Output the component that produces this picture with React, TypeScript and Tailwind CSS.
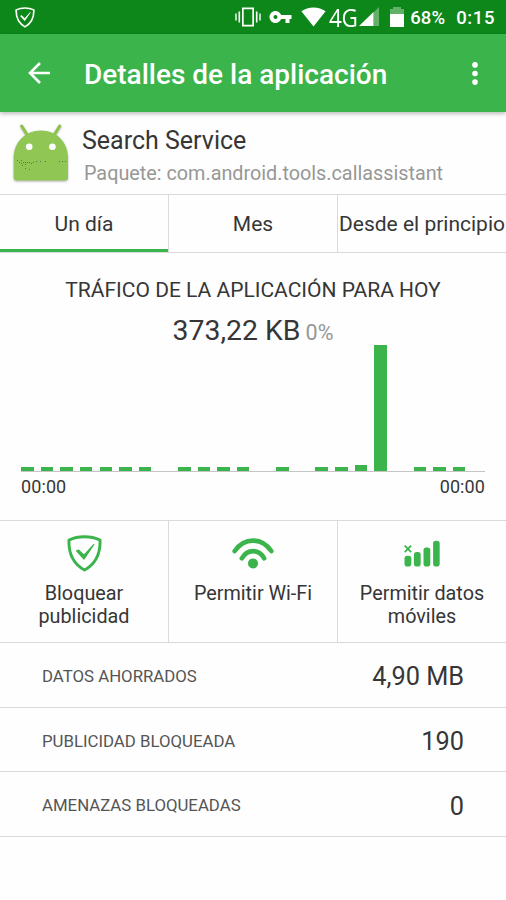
import React from 'react';

interface Action {
  label: string;
  icon: React.ReactNode;
}

interface Stat {
  label: string;
  value: string;
}

// share of the chart height used in each hour of the day
const HOURLY_TRAFFIC = [
  3.2, 3.2, 3.2, 3.2, 3.2, 3.2, 3.2, 0, 3.2, 3.2, 3.2, 3.2,
  0, 3.2, 0, 3.2, 3.2, 5, 100, 0, 3.2, 3.2, 3.2, 0,
];

const TABS = ['Un día', 'Mes', 'Desde el principio'];

const ShieldIcon: React.FC<{ className?: string; strokeWidth?: number }> = ({ className, strokeWidth = 3 }) => (
  <svg viewBox="0 0 36 38" fill="none" stroke="currentColor" strokeWidth={strokeWidth} className={className}>
    <path d="M18 1.8C12.4 1.8 6.6 3 2 5.2C1.7 14.6 3.3 28 18 36C32.7 28 34.3 14.6 34 5.2C29.4 3 23.6 1.8 18 1.8Z" strokeLinejoin="round" />
    <path d="M9.8 16.2L12 15.5L17.5 20.8L27.5 9.8L17.4 24.8Z" fill="currentColor" strokeWidth="1.2" strokeLinejoin="round" />
  </svg>
);

const VibrateIcon = () => (
  <svg viewBox="0 0 26 20" className="h-5 w-[26px]" fill="currentColor">
    <path d="M7 .5h12v19H7zM8.700 2.300v15.400h8.600V2.300z" fillRule="evenodd" />
    <path d="M.3 6.500h1.400v7H.3zM3.500 4.500h1.600v11H3.500zM20.900 4.500h1.600v11h-1.600zM24.300 6.500h1.400v7h-1.400z" />
  </svg>
);

const KeyIcon = () => (
  <svg viewBox="1 6 22 12" className="h-3 w-[23px]" fill="currentColor">
    <path d="M12.65 10C11.83 7.67 9.61 6 7 6c-3.31 0-6 2.69-6 6s2.69 6 6 6c2.61 0 4.83-1.67 5.65-4H17v4h4v-4h2v-4H12.65zM7 14c-1.1 0-2-.9-2-2s.9-2 2-2 2 .9 2 2-.9 2-2 2z" />
  </svg>
);

const WifiIcon = () => (
  <svg viewBox="0 0 25 20" className="h-5 w-[25px]" fill="currentColor">
    <path d="M12.5 19.5L.4 4.2C3.7 1.8 8 .4 12.5 .4s8.800 1.400 12.100 3.800z" />
  </svg>
);

const SignalIcon = () => (
  <svg viewBox="0 0 20 20" className="h-5 w-5" fill="currentColor">
    <path d="M14.5 5.5L20 0v19h-5.500z" opacity=".35" />
    <path d="M0 19L14.500 5v14z" />
  </svg>
);

const BatteryIcon = () => (
  <svg viewBox="0 0 14 20" className="h-5 w-3.5" fill="currentColor">
    <path d="M0 2h3V0h8v2h3v5H0z" opacity=".35" />
    <path d="M0 7h14v13H0z" />
  </svg>
);

const BackIcon = () => (
  <svg viewBox="0 0 22 22" className="h-[22px] w-[22px]" fill="none" stroke="currentColor" strokeWidth="2.6">
    <path d="M22 11H2.500M12 1L2 11l10 10" />
  </svg>
);

const MoreIcon = () => (
  <svg viewBox="0 0 6 23" className="h-[23px] w-1.5" fill="currentColor">
    <circle cx="3" cy="2.9" r="2.8" />
    <circle cx="3" cy="11.5" r="2.8" />
    <circle cx="3" cy="20.1" r="2.8" />
  </svg>
);

const AndroidIcon = () => (
  <svg viewBox="0 0 56 58" className="h-[58px] w-14 drop-shadow-[0_1px_1px_rgba(0,0,0,0.3)]">
    <path d="M8.700 2L14 10.500M46.700 2L41.500 10.500" stroke="#8bc34a" strokeWidth="3" strokeLinecap="round" />
    <path d="M.7 34C.7 18 12.500 6.500 28 6.500S55 18 55 34v19.500a3 3 0 0 1-3 3H3.700a3 3 0 0 1-3-3z" fill="#8fc654" />
    <circle cx="16.2" cy="22.8" r="3.3" fill="#fff" />
    <circle cx="39.4" cy="22.8" r="3.3" fill="#fff" />
    <path d="M4 36.500h1M8 36.500h1M6 38.500h1M8 39.500h1M10 38.500h1M12 38.500h1M14 38.500h1M9 41.500h1M12 40.500h1M16 38.500h1M18 39.500h1M20 38.500h1M23 37.500h1M27 37.500h1M32 37.500h1M46 37.500h1M49 37.500h1M52 37.500h1M12 44.500h1M16 45.500h1" stroke="#4b8048" />
  </svg>
);

const WifiArcsIcon = () => (
  <svg viewBox="0 0 42 32" className="h-8 w-[42px]" fill="none" stroke="currentColor" strokeWidth="4.6" strokeLinecap="round">
    <path d="M2.700 14C12.500 .2 29.500 .2 39.300 14" />
    <path d="M9.800 21.300C15.500 11.700 26.500 11.700 32.200 21.300" />
    <circle cx="21" cy="26.4" r="5" fill="currentColor" stroke="none" />
  </svg>
);

const MobileDataIcon = () => (
  <svg viewBox="0 0 36 27" className="h-[27px] w-9" fill="currentColor">
    <rect x=".5" y="15.7" width="6.8" height="10.8" rx="2.8" />
    <rect x="9.9" y="12" width="6.8" height="14.5" rx="2.8" />
    <rect x="19.5" y="7.5" width="6.8" height="19" rx="2.8" />
    <rect x="29.1" y=".7" width="6.6" height="25.8" rx="2.8" />
    <path d="M.7 5.700l6.400 6.400M7.100 5.700L.7 12.100" stroke="currentColor" strokeWidth="1.8" />
  </svg>
);

const ACTIONS: Action[] = [
  { label: 'Bloquear publicidad', icon: <ShieldIcon className="h-[37px] w-[35px]" /> },
  { label: 'Permitir Wi-Fi', icon: <WifiArcsIcon /> },
  { label: 'Permitir datos móviles', icon: <MobileDataIcon /> },
];

const STATS: Stat[] = [
  { label: 'DATOS AHORRADOS', value: '4,90 MB' },
  { label: 'PUBLICIDAD BLOQUEADA', value: '190' },
  { label: 'AMENAZAS BLOQUEADAS', value: '0' },
];

const StatusBar = () => (
  <div className="flex h-[34px] items-center bg-[#0d8719] pl-[15px] pr-[11px] text-white">
    <ShieldIcon className="h-[21px] w-5" strokeWidth={3} />
    <div className="ml-auto flex items-center">
      <VibrateIcon />
      <span className="ml-2"><KeyIcon /></span>
      <span className="ml-[9px]"><WifiIcon /></span>
      <span className="ml-[3px] flex w-[30px] text-[25px] leading-none">
        <span className="block origin-left scale-x-[0.9] font-['Open_Sans'] tracking-[-0.5px]">4G</span>
      </span>
      <SignalIcon />
      <span className="ml-[11px]"><BatteryIcon /></span>
      <span className="ml-1.5 pt-0.5 text-[18.5px] font-medium leading-none tracking-[0.1px]">68%</span>
      <span className="ml-[11px] pt-0.5 text-[18.5px] font-medium leading-none tracking-[0.6px]">0:15</span>
    </div>
  </div>
);

const AppBar = () => (
  <header className="relative flex h-[78px] items-center bg-[#3bb44b] pl-7 pr-7 text-white shadow-[0_2px_4px_rgba(0,0,0,0.25)]">
    <button type="button" aria-label="Atrás"><BackIcon /></button>
    <h1 className="ml-[34px] pt-[3px] text-[28px] font-medium leading-none">Detalles de la aplicación</h1>
    <button type="button" aria-label="Más opciones" className="ml-auto"><MoreIcon /></button>
  </header>
);

const TrafficChart = () => (
  <div className="mx-[21px]">
    <div className="flex h-[127px] items-end justify-between border-b border-[#c4c4c4]">
      {HOURLY_TRAFFIC.map((value, hour) => (
        <div key={hour} className="w-[12.6px] bg-[#3bb44b]" style={{ height: `${value}%` }} />
      ))}
    </div>
    <div className="mt-[3px] flex justify-between text-[18px] leading-[24px] tracking-[0.1px]">
      <span>00:00</span>
      <span>00:00</span>
    </div>
  </div>
);

const App: React.FC = () => {
  return (
    <div className="h-[900px] w-[506px] overflow-hidden bg-[#fefefe] font-[Roboto,sans-serif] text-[#363636]">
      <StatusBar />
      <AppBar />

      <section className="flex h-[83px] border-b border-[#dadada] pl-[13px] pt-3">
        <AndroidIcon />
        <div className="ml-[13px] pt-[3px]">
          <h2 className="text-[25px] leading-[28px]">Search Service</h2>
          <p className="ml-0.5 mt-[7px] text-[19.8px] leading-[24px] text-[#969896]">Paquete: com.android.tools.callassistant</p>
        </div>
      </section>

      <nav className="grid h-[58px] grid-cols-[169px_169px_168px] border-b border-[#dadada]">
        {TABS.map((tab, index) => (
          <button
            key={tab}
            type="button"
            className={`flex items-center justify-center whitespace-nowrap border-[#dadada] pt-[3px] text-[21px] ${index < 2 ? 'border-r' : ''} ${
              index === 0 ? 'shadow-[inset_0_-3px_0_#3bb44b]' : ''
            }`}
          >
            {tab}
          </button>
        ))}
      </nav>

      <section className="h-[268px] border-b border-[#dadada] pt-[25px]">
        <h3 className="text-center text-[21px] leading-[25px]">TRÁFICO DE LA APLICACIÓN PARA HOY</h3>
        <p className="mt-[11px] h-[31px] text-center text-[28.4px] leading-[33px]">
          373,22 KB <span className="-ml-0.5 text-[21.5px] text-[#969896]">0%</span>
        </p>
        <TrafficChart />
      </section>

      <section className="grid h-[122px] grid-cols-[169px_169px_168px] border-b border-[#dadada]">
        {ACTIONS.map((action, index) => (
          <button
            key={action.label}
            type="button"
            className={`flex flex-col items-center border-[#dadada] px-5 pt-[13px] text-[19.8px] leading-[23px] ${index < 2 ? 'border-r' : ''}`}
          >
            <span className="flex h-[38px] items-center text-[#3bb44b]">{action.icon}</span>
            <span className="mt-2.5">{action.label}</span>
          </button>
        ))}
      </section>

      <dl>
        {STATS.map((stat) => (
          <div key={stat.label} className="flex h-[64.6px] items-center justify-between border-b border-[#dadada] px-[42px] pt-1">
            <dt className="text-[16.8px] text-[#555]">{stat.label}</dt>
            <dd className="pt-px text-[25.3px]">{stat.value}</dd>
          </div>
        ))}
      </dl>
    </div>
  );
};

export default App;
